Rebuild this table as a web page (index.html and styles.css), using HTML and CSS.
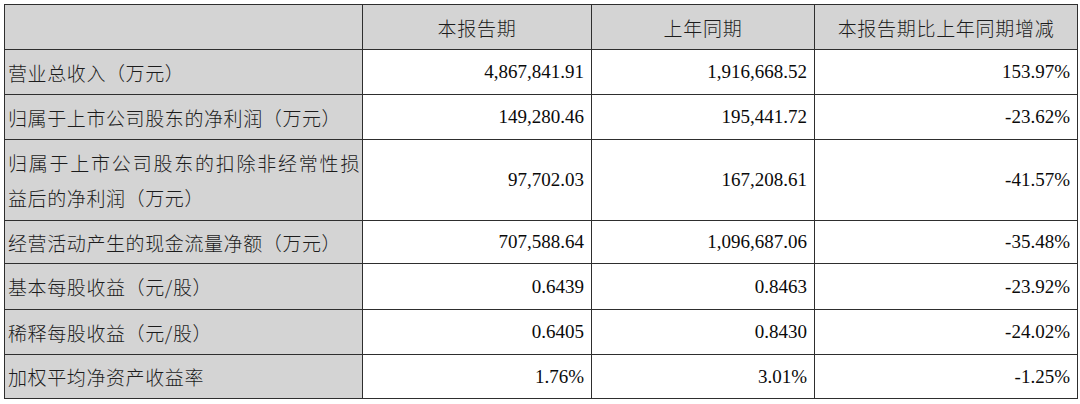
FILE: index.html
```html
<!DOCTYPE html>
<html lang="zh-CN">
<head>
<meta charset="utf-8">
<title>主要财务数据</title>
<link rel="stylesheet" href="styles.css">
</head>
<body>
<div class="page">
  <table class="fin">
    <colgroup>
      <col class="c-label">
      <col class="c-cur">
      <col class="c-prev">
      <col class="c-chg">
    </colgroup>
    <thead>
      <tr class="r45">
        <th class="label"></th>
        <th>本报告期</th>
        <th>上年同期</th>
        <th>本报告期比上年同期增减</th>
      </tr>
    </thead>
    <tbody>
      <tr class="r45">
        <td class="label">营业总收入（万元）</td>
        <td class="num">4,867,841.91</td>
        <td class="num">1,916,668.52</td>
        <td class="num">153.97%</td>
      </tr>
      <tr class="r45">
        <td class="label">归属于上市公司股东的净利润（万元）</td>
        <td class="num">149,280.46</td>
        <td class="num">195,441.72</td>
        <td class="num">-23.62%</td>
      </tr>
      <tr class="r81">
        <td class="label wrap">归属于上市公司股东的扣除非经常性损益后的净利润（万元）</td>
        <td class="num">97,702.03</td>
        <td class="num">167,208.61</td>
        <td class="num">-41.57%</td>
      </tr>
      <tr class="r43">
        <td class="label">经营活动产生的现金流量净额（万元）</td>
        <td class="num">707,588.64</td>
        <td class="num">1,096,687.06</td>
        <td class="num">-35.48%</td>
      </tr>
      <tr class="r46">
        <td class="label">基本每股收益（元/股）</td>
        <td class="num">0.6439</td>
        <td class="num">0.8463</td>
        <td class="num">-23.92%</td>
      </tr>
      <tr class="r45">
        <td class="label">稀释每股收益（元/股）</td>
        <td class="num">0.6405</td>
        <td class="num">0.8430</td>
        <td class="num">-24.02%</td>
      </tr>
      <tr class="r44">
        <td class="label">加权平均净资产收益率</td>
        <td class="num">1.76%</td>
        <td class="num">3.01%</td>
        <td class="num">-1.25%</td>
      </tr>
    </tbody>
  </table>
</div>
</body>
</html>
```

FILE: styles.css
```css
html, body {
  margin: 0;
  padding: 0;
  background: #ffffff;
}

.page {
  padding: 4px 0 0 4px;
}

.fin {
  width: 1073px;
  border-collapse: collapse;
  table-layout: fixed;
  color: #0a0a0a;
  font-family: "Liberation Serif", "Noto Sans CJK SC", serif;
  font-size: 19px;
}

.c-label { width: 358px; }
.c-cur { width: 229px; }
.c-prev { width: 223px; }
.c-chg { width: 263px; }

.fin th,
.fin td {
  border: 1px solid #2e2e2e;
  padding: 0 7px 0 4px;
  vertical-align: middle;
  box-sizing: border-box;
}

.fin th {
  background: #d4d4d4;
  font-weight: 300;
  text-align: center;
  font-family: "Noto Sans CJK SC", sans-serif;
  letter-spacing: 0.7px;
  color: #1c1c1c;
  padding: 0;
}

.fin td.label {
  background: #d4d4d4;
  font-family: "Noto Sans CJK SC", sans-serif;
  font-weight: 300;
  color: #1c1c1c;
  letter-spacing: 0.6px;
  text-align: left;
  padding-left: 3px;
  padding-right: 2px;
  white-space: nowrap;
}

.fin td.label.wrap {
  white-space: normal;
  text-align: justify;
  line-height: 35px;
}

.fin td.num {
  text-align: right;
  white-space: nowrap;
}

.r45 { height: 45px; }
.r81 { height: 81px; }
.r43 { height: 43px; }
.r46 { height: 46px; }
.r44 { height: 44px; }
```
